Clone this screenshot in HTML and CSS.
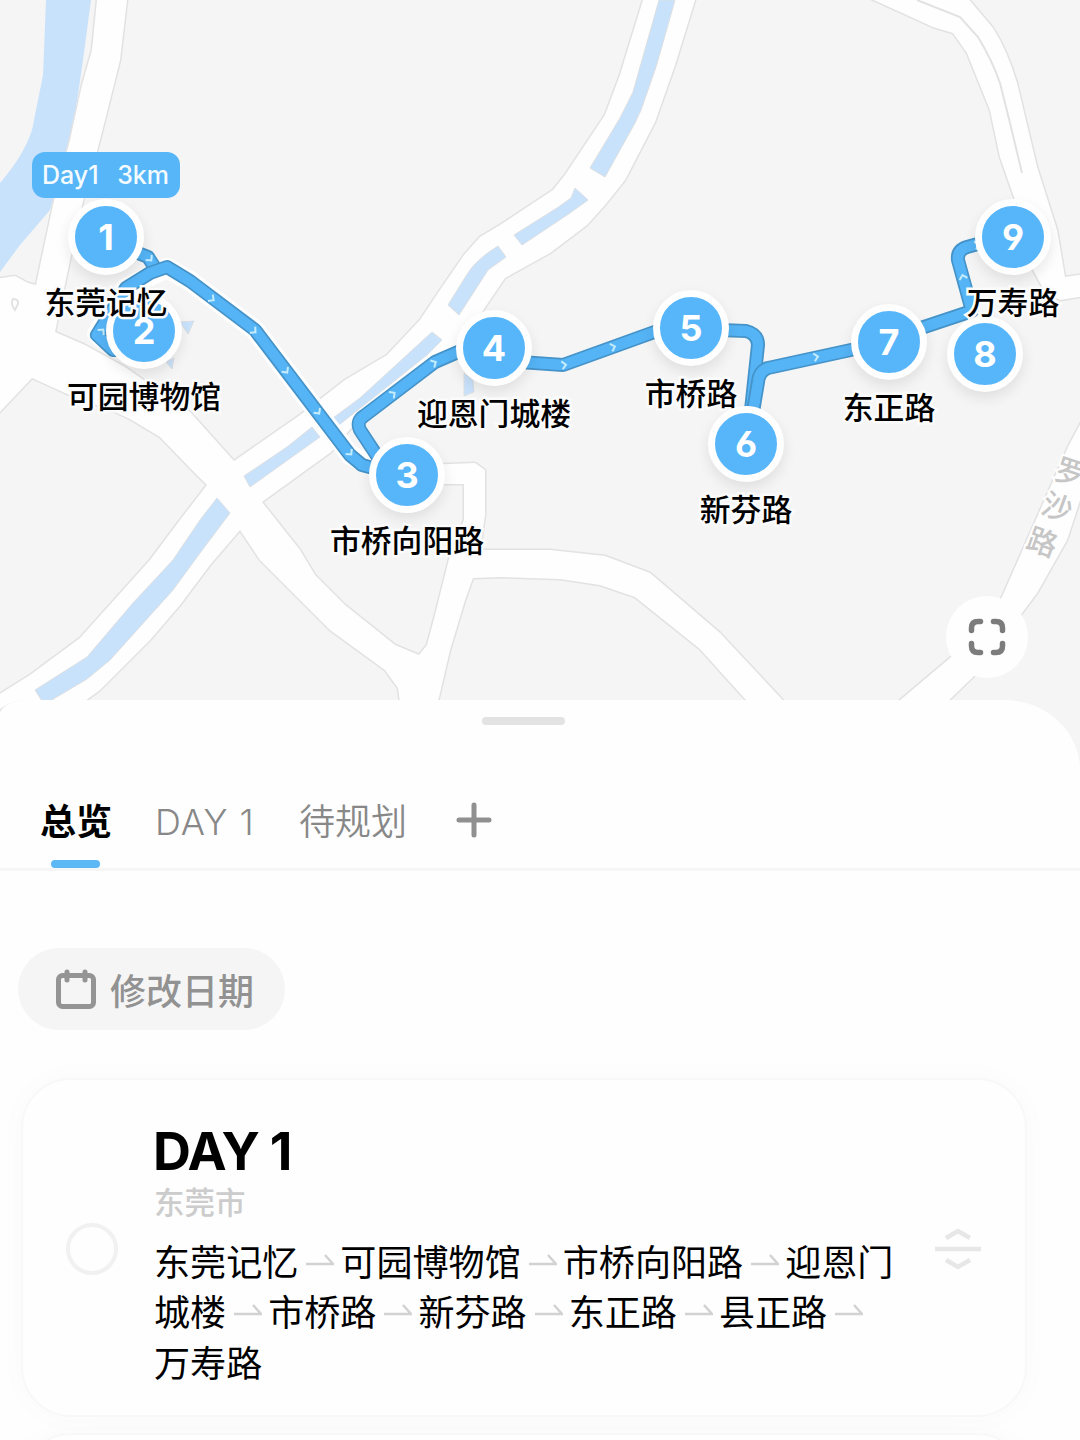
FILE: index.html
```html
<!DOCTYPE html>
<html lang="zh-CN">
	<head>
		<meta charset="utf-8" />
		<meta name="viewport" content="width=device-width, initial-scale=1" />
		<title>DAY 1</title>
		<link rel="stylesheet" href="styles.css">
	</head>

	<body>
		<div class="map">
			<svg class="map-canvas" viewBox="0 0 1080 780">
				<defs>
					<g id="roads">
						<path d="M97 0L92 50L82 85L70 140L53 205L36 285L28 283L15 276L-5 279V417L32 378L65 393L115 412L130 419L160 437L190 468L207 485L180 520L150 560L80 638L30 675L-5 697V722H40L70 712L100 690L150 640L180 605L210 565L240 530L260 560L300 600L330 630L385 670L398 688L401 710H436L450 650L465 600L473 578L500 577L560 579L600 585L635 597L700 649L755 710H792L720 633L650 573L605 556L550 550H480L485 515V470L475 463L425 465V484H464V520L450 555L435 615L427 645L419 655L395 645L345 605L315 575L300 550L262 502L331 452L362 415L455 355L470 330L490 300L505 278L550 253L587 225L605 205L625 180L655 122L675 65L695 0H643L620 75L605 115L585 145L565 175L553 190L500 225L480 237L464 255L440 290L420 320L387 355L345 380L300 415L234 461L190 412L125 367L85 345L55 332L70 260L82 205L96 155L105 120L120 60L127 0Z" />
						<path d="M865 -4L933 27L953 33L967 53L990 110L1000 157L1015 200L1033 270L1045 292L1060 300L1085 296V274L1065 277L1057 230L1037 167L1017 83Q1007 50 993 28L966 -4Z" />
						<path d="M1085 415L1068 447L1002 597L985 625L950 658L892 707H942L973 677L1022 613L1037 593L1067 540L1085 485Z" />
					</g>
					<path id="chevron" d="M-2 -4L2 0L-2 4" />
				</defs>

				<path class="water" d="M46 0L43 75L32 130Q24 155 0 183V272L20 245L50 210L70 150L83 60L91 0Z" />
				<use href="#roads" class="road-edge" />
				<use href="#roads" class="road-fill" />
				<path class="road-line" d="M917 0L960 17L978 37Q992 60 1000 83L1010 123L1022 173" />
				<path class="road-line" d="M13 299Q19 299 18 304L15 310Q10 304 13 299Z" />

				<!-- river -->
				<path class="river" d="M659 0L642 60L633 92L620 118L590 168L605 177L635 123L641 110L648 90L656 67L668 25L675 0Z" />
				<path class="river" d="M575 188L588 200L570 213L522 245L514 235L557 208L571 198Z" />
				<path class="river" d="M498 246L506 257L488 270L459 315L448 305L466 276Q475 260 498 246Z" />
				<path class="river" d="M432 332L442 340L427 355L339 425L333 418L360 398Z" />
				<path class="river" d="M312 427L320 437L250 487L244 476L287 447Z" />
				<path class="river" d="M217 498L230 513L200 553L173 590L110 660L87 679L50 701H42L35 690L87 657L133 603L173 560L200 520Z" />
				<path class="river" d="M464 373L473 380L474 392L464 396ZM180 322L194 321L188 334ZM166 362L174 358L172 369Z" />
				<path class="corner" d="M0 711Q8 704 22 702" />

				<!-- day route -->
				<g id="route">
					<path class="route-halo" d="M105 340L97 334L126 288L167 268L190 281L255 330L350 455L380 470" />
					<path class="route-edge" d="M128 249L148 257L155 268" />
					<path class="route-line" d="M128 249L148 257L155 268" />
					<path class="route-edge" d="M140 350H113L97 335L126 288L150 273L167 267L190 281L255 330L350 455L362 465L380 470" />
					<path class="route-line" d="M140 350H113L97 335L126 288L150 273L167 267L190 281L255 330L350 455L362 465L380 470" />
					<path class="route-edge" d="M385 468L360 430Q356 421 364 416L435 362L465 349" />
					<path class="route-line" d="M385 468L360 430Q356 421 364 416L435 362L465 349" />
					<path class="route-edge" d="M520 362L563 365L660 330" />
					<path class="route-line" d="M520 362L563 365L660 330" />
					<path class="route-edge" d="M720 330L746 331Q758 334 758 345L751 410" />
					<path class="route-line" d="M720 330L746 331Q758 334 758 345L751 410" />
					<path class="route-edge" d="M753 412L758 382Q759 371 768 368L860 348" />
					<path class="route-line" d="M753 412L758 382Q759 371 768 368L860 348" />
					<path class="route-edge" d="M918 329L972 311L958 260Q957 250 967 247L985 242" />
					<path class="route-line" d="M918 329L972 311L958 260Q957 250 967 247L985 242" />
				</g>
				<g class="chevrons">
					<use href="#chevron" transform="translate(150 259) rotate(50)" />
					<use href="#chevron" transform="translate(102 331) rotate(-50)" />
					<use href="#chevron" transform="translate(212 299) rotate(37)" />
					<use href="#chevron" transform="translate(254 331) rotate(42)" />
					<use href="#chevron" transform="translate(286 371) rotate(53)" />
					<use href="#chevron" transform="translate(318 412) rotate(53)" />
					<use href="#chevron" transform="translate(350 453) rotate(50)" />
					<use href="#chevron" transform="translate(393 394) rotate(-37)" />
					<use href="#chevron" transform="translate(434 363) rotate(-30)" />
					<use href="#chevron" transform="translate(564 365) rotate(-10)" />
					<use href="#chevron" transform="translate(613 347) rotate(-19)" />
					<use href="#chevron" transform="translate(816 357) rotate(-12)" />
					<use href="#chevron" transform="translate(963 277) rotate(-105)" />
					<use href="#chevron" transform="translate(977 245) rotate(-15)" />
				</g>

				<g class="road-name">
					<text transform="translate(1070 473) rotate(18)" y="10">罗</text>
					<text transform="translate(1057 508) rotate(20)" y="10">沙</text>
					<text transform="translate(1042 543) rotate(20)" y="10">路</text>
				</g>
			</svg>

			<div class="day-tag"><span>Day1</span><span>3km</span></div>
			<div class="pin pin-8"><b>8</b></div>
			<div class="pin pin-2"><b>2</b><span>可园博物馆</span></div>
			<div class="pin pin-1"><b>1</b><span>东莞记忆</span></div>
			<div class="pin pin-3"><b>3</b><span>市桥向阳路</span></div>
			<div class="pin pin-4"><b>4</b><span>迎恩门城楼</span></div>
			<div class="pin pin-5"><b>5</b><span>市桥路</span></div>
			<div class="pin pin-6"><b>6</b><span>新芬路</span></div>
			<div class="pin pin-7"><b>7</b><span>东正路</span></div>
			<div class="pin pin-9"><b>9</b><span>万寿路</span></div>

			<button class="fullscreen" aria-label="全屏">
				<svg width="38" height="38" viewBox="0 0 38 38">
					<path d="M3.5 12.5V10Q3.5 3.5 10 3.5H12.5M25.500 3.500H28Q34.500 3.500 34.500 10V12.500M34.500 25.500V28Q34.500 34.500 28 34.500H25.500M12.500 34.500H10Q3.500 34.500 3.500 28V25.500" />
				</svg>
			</button>
		</div>

		<div class="sheet">
			<div class="handle"></div>
			<div class="tabs">
				<div class="tab active">总览</div>
				<div class="tab day">DAY 1</div>
				<div class="tab">待规划</div>
				<svg class="plus" width="36" height="36" viewBox="0 0 36 36"><path d="M18 3V33M3 18H33" /></svg>
			</div>

			<button class="date-btn">
				<svg width="42" height="42" viewBox="0 0 42 42">
					<rect x="3.500" y="7.500" width="35" height="31" rx="4" />
					<path d="M12 4V12M30 4V12" />
				</svg>
				修改日期
			</button>

			<div class="card">
				<div class="radio"></div>
				<div class="info">
					<h2>DAY 1</h2>
					<div class="city">东莞市</div>
					<p class="stops">东莞记忆<svg class="arrow" viewBox="0 0 28 12"><path d="M0 10H27L19 1" /></svg>可园博物馆<svg class="arrow" viewBox="0 0 28 12"><path d="M0 10H27L19 1" /></svg>市桥向阳路<svg class="arrow" viewBox="0 0 28 12"><path d="M0 10H27L19 1" /></svg>迎恩门城楼<svg class="arrow" viewBox="0 0 28 12"><path d="M0 10H27L19 1" /></svg>市桥路<svg class="arrow" viewBox="0 0 28 12"><path d="M0 10H27L19 1" /></svg>新芬路<svg class="arrow" viewBox="0 0 28 12"><path d="M0 10H27L19 1" /></svg>东正路<svg class="arrow" viewBox="0 0 28 12"><path d="M0 10H27L19 1" /></svg>县正路<svg class="arrow" viewBox="0 0 28 12"><path d="M0 10H27L19 1" /></svg>万寿路</p>
				</div>
				<svg class="sort" width="46" height="44" viewBox="0 0 46 44">
					<path d="M0 22H46M11 11L23 4L35 11M11 33L23 40L35 33" />
				</svg>
			</div>
			<div class="card next"></div>
		</div>
	</body>
</html>
```

FILE: styles.css
```css
* { box-sizing: border-box; }

body {
    margin: 0;
    width: 1080px;
    height: 1440px;
    overflow: hidden;
    background-color: #fefefe;
    font-family: Inter, "Noto Sans CJK SC", sans-serif;
    color: #000;
}

/* map */
.map {
    position: relative;
    height: 780px;
    background-color: #f5f5f5;
    overflow: hidden;
}

.map-canvas { display: block; width: 1080px; height: 780px; }
.water, .river { fill: #c9e2fb; }
.river { stroke: #dcdfe2; stroke-width: 1; }
.road-edge { fill: #e2e2e2; stroke: #e2e2e2; stroke-width: 3; stroke-linejoin: round; }
.road-fill { fill: #fefefe; }
.road-line { fill: none; stroke: #e2e2e2; stroke-width: 2; }
.corner { fill: none; stroke: #e2e5e5; stroke-width: 3; }

.route-halo, .route-edge, .route-line { fill: none; stroke-linejoin: round; }
.route-halo { stroke: #fefefe; stroke-width: 20; }
.route-edge { stroke: #4593c8; stroke-width: 14; }
.route-line { stroke: #55b4f6; stroke-width: 10.5; }
.chevrons { fill: none; stroke: #c5ecfb; stroke-width: 2; }

.road-name text {
    font-size: 30px;
    font-weight: 500;
    fill: #c6c6c6;
    stroke: #fefefe;
    stroke-width: 4;
    paint-order: stroke;
    text-anchor: middle;
}

.day-tag {
    position: absolute;
    left: 32px;
    top: 152px;
    width: 148px;
    height: 46px;
    padding: 0 11px 0 10px;
    display: flex;
    justify-content: space-between;
    align-items: center;
    border-radius: 13px;
    background-color: #57b6f8;
    color: #f4fbff;
    font-size: 25px;
    font-weight: 500;
}

.pin { position: absolute; width: 0; height: 0; }

.pin b {
    position: absolute;
    left: -38px;
    top: -38px;
    width: 76px;
    height: 76px;
    border: 7px solid #fefefe;
    border-radius: 50%;
    background-color: #57b6fa;
    box-shadow: 0 6px 14px rgba(0, 0, 0, 0.09);
    color: #fff;
    font-family: Inter, sans-serif;
    font-feature-settings: "cv03", "cv04";
    font-size: 36px;
    line-height: 62px;
    text-align: center;
}

.pin span {
    position: absolute;
    left: -100px;
    top: 43px;
    width: 200px;
    font-size: 30.8px;
    font-weight: 500;
    line-height: 45px;
    text-align: center;
    -webkit-text-stroke: 5px #fbfbfb;
    paint-order: stroke fill;
}

.pin-1 { left: 106px; top: 237px; z-index: 2; }
.pin-2 { left: 144px; top: 331px; }
.pin-3 { left: 407px; top: 475px; }
.pin-4 { left: 494px; top: 348px; }
.pin-5 { left: 691px; top: 328px; }
.pin-6 { left: 746px; top: 444px; }
.pin-7 { left: 889px; top: 342px; }
.pin-8 { left: 985px; top: 354px; }
.pin-9 { left: 1013px; top: 237px; }

.fullscreen {
    position: absolute;
    left: 946px;
    top: 596px;
    width: 82px;
    height: 82px;
    padding: 0;
    display: flex;
    align-items: center;
    justify-content: center;
    border: none;
    border-radius: 50%;
    background-color: #fefefe;
}

.fullscreen path { fill: none; stroke: #7c7c7c; stroke-width: 5.5; stroke-linecap: round; }

/* bottom sheet */
.sheet {
    position: relative;
    height: 740px;
    margin-top: -80px;
    padding-top: 17px;
    border-radius: 30px 76px 0 0 / 14px 70px 0 0;
    background-color: #fefefe;
    overflow: hidden;
}

.handle {
    width: 83px;
    height: 8px;
    margin-left: 482px;
    border-radius: 4px;
    background-color: #e3e3e4;
}

.tabs {
    display: flex;
    height: 146px;
    padding: 71px 0 0 40px;
    border-bottom: 3px solid #f6f6f6;
}

.tab {
    position: relative;
    margin-right: 43px;
    color: #888;
    font-size: 36px;
    font-weight: 350;
    line-height: 53px;
    white-space: nowrap;
}

.tab.day { width: 101px; letter-spacing: 1px; }
.tab.active { width: 72px; color: #000; font-weight: 700; }

.tab.active::after {
    content: "";
    position: absolute;
    left: 11px;
    top: 64px;
    width: 49px;
    height: 8px;
    border-radius: 4px;
    background-color: #5bb8f5;
}

.plus { margin: 6px 0 0 6px; }
.plus path { stroke: #909090; stroke-width: 5; stroke-linecap: round; }

.date-btn {
    display: flex;
    align-items: center;
    gap: 13px;
    width: 267px;
    height: 82px;
    margin: 77px 0 0 18px;
    padding: 0 0 0 37px;
    border: none;
    border-radius: 41px;
    background-color: #f5f5f5;
    color: #929292;
    font-family: inherit;
    font-size: 36px;
    font-weight: 500;
    white-space: nowrap;
}

.date-btn rect, .date-btn path { fill: none; stroke: #949494; stroke-width: 5; stroke-linecap: round; }

.card {
    display: flex;
    align-items: center;
    width: 1006px;
    height: 339px;
    margin: 48px 0 0 21px;
    padding: 2px 44px 0 43px;
    border: 2px solid #f8f8f8;
    border-radius: 50px;
    background-color: #fefefe;
    box-shadow: 0 0 30px rgba(0, 0, 0, 0.025);
}

.card.next { margin-top: 16px; }

.radio {
    width: 52px;
    height: 52px;
    border: 4px solid #f1f1f1;
    border-radius: 50%;
}

.info { width: 745px; margin-left: 36px; padding-top: 14px; }

.info h2 {
    margin: 0 0 0 -1px;
    font-size: 52.5px;
    font-weight: 700;
    line-height: 58px;
    letter-spacing: -1.2px;
}

.city { color: #ccc; font-size: 30.5px; font-weight: 500; line-height: 46px; }

.stops {
    margin: 12px 0 0;
    font-size: 36.1px;
    font-weight: 400;
    line-height: 50.5px;
}

.arrow { width: 28px; height: 12px; margin: 0 6px 0 8px; vertical-align: 10px; }
.arrow path { fill: none; stroke: #d2d2d2; stroke-width: 2.5; }

.sort { margin-left: auto; }
.sort path { fill: none; stroke: #e7e7e7; stroke-width: 4.5; }
```
